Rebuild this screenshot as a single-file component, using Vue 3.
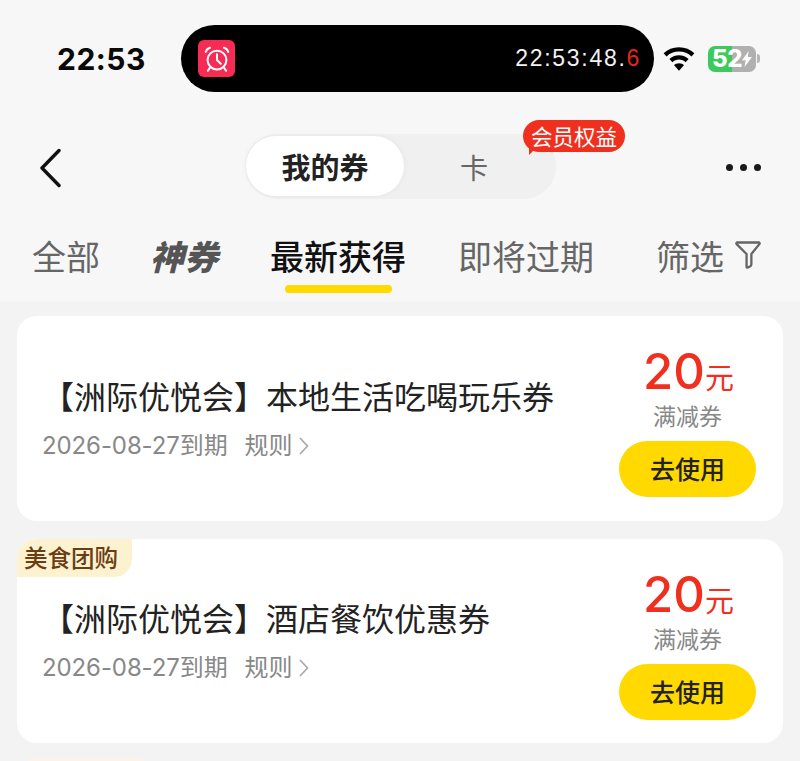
<script setup>
const tabs = [
  { label: '全部', cls: 'all' },
  { label: '神券', cls: 'god' },
  { label: '最新获得', cls: 'latest' },
  { label: '即将过期', cls: 'soon' },
]

const coupons = [
  { title: '【洲际优悦会】本地生活吃喝玩乐券', date: '2026-08-27到期', amount: 20, tag: '' },
  { title: '【洲际优悦会】酒店餐饮优惠券', date: '2026-08-27到期', amount: 20, tag: '美食团购' },
]
</script>

<template>
  <div class="page">
    <div class="status">
      <span class="clock">22:53</span>
      <div class="island">
        <span class="alarm">
          <svg width="30" height="30" viewBox="0 0 28 28" fill="none" stroke="#fff" stroke-width="1.900" stroke-linecap="round" stroke-linejoin="round">
            <circle cx="14" cy="15" r="8.800" />
            <path d="M14 9.500V15l3.500 3.500" />
            <path d="M3.500 7.500c.5-1.900 2-3.500 4-4M24.500 7.500c-.5-1.900-2-3.500-4-4" />
            <path d="M7.500 22 5.500 25M20.500 22l2 3" />
          </svg>
        </span>
        <span class="stamp">22:53:48.<em>6</em></span>
      </div>
      <svg class="wifi" width="32" height="24" viewBox="0 0 30 22">
        <path d="M15 0C9.200 0 4.400 2 .6 5.600l2.700 3C6.400 5.700 10.400 4 15 4s8.600 1.700 11.700 4.600l2.700-3C25.600 2 20.800 0 15 0Z" />
        <path d="M15 7.500c-3.600 0-6.700 1.300-9 3.500l2.800 3c1.600-1.500 3.800-2.500 6.200-2.500s4.600 1 6.200 2.500l2.800-3c-2.300-2.200-5.400-3.500-9-3.500Z" />
        <path d="M15 15c-1.900 0-3.500.7-4.600 1.800L15 22l4.600-5.200C18.500 15.700 16.900 15 15 15Z" />
      </svg>
      <div class="battery">
        <div class="cell">
          <span class="level">52</span>
          <svg class="bolt" width="10" height="18" viewBox="0 0 12 19"><path d="M8 0 0 11h4.500L3 19l9-12H7Z" fill="#fff" /></svg>
        </div>
        <i class="nub"></i>
      </div>
    </div>

    <div class="nav">
      <svg class="back" width="22" height="40" viewBox="0 0 22 40" fill="none" stroke="#111" stroke-width="3.400" stroke-linecap="round" stroke-linejoin="round">
        <path d="M20 2.500 3 20l17 17.500" />
      </svg>
      <div class="segment">
        <span class="seg active">我的券</span>
        <span class="seg">卡</span>
        <span class="badge">会员权益</span>
      </div>
      <div class="more"><i></i><i></i><i></i></div>
    </div>

    <div class="tabs">
      <span v-for="t in tabs" :key="t.cls" class="tab" :class="t.cls">{{ t.label }}</span>
      <span class="tab filter">
        筛选
        <svg width="26" height="28" viewBox="0 0 27 29" fill="none" stroke="#666" stroke-width="2.400" stroke-linejoin="round">
          <path d="M2.500 1.500h22c1 0 1.400 1 .8 1.700l-8.300 10.300v10.500c0 1-.6 1.900-1.500 2.400l-2.500 1.200c-.5.200-1-.2-1-.7V13.500L1.700 3.200c-.6-.7-.2-1.700.8-1.700Z" />
        </svg>
      </span>
    </div>

    <div class="list">
      <div v-for="c in coupons" :key="c.title" class="card">
        <span v-if="c.tag" class="tag">{{ c.tag }}</span>
        <div class="info">
          <div class="title">{{ c.title }}</div>
          <div class="meta">
            <span class="date">{{ c.date }}</span>
            <span class="rule">规则</span>
            <svg width="10" height="18" viewBox="0 0 10 18" fill="none" stroke="#aaa" stroke-width="1.800" stroke-linecap="round" stroke-linejoin="round"><path d="m1.500 1.500 7 7.500-7 7.500" /></svg>
          </div>
        </div>
        <div class="side">
          <div class="price"><b>{{ c.amount }}</b><span>元</span></div>
          <div class="kind">满减券</div>
          <div class="use">去使用</div>
        </div>
      </div>
      <div class="peek"></div>
    </div>
  </div>
</template>

<style scoped>
.page {
  width: 800px;
  height: 761px;
  overflow: hidden;
  background: #f7f7f7;
  font-family: "Noto Sans CJK SC", "Noto Sans", sans-serif;
  color: #111;
}
.status {
  display: flex;
  align-items: center;
  height: 67px;
  padding: 25px 0 0 57px;
}
.clock {
  width: 124px;
  padding-top: 1px;
  font-family: Inter, sans-serif;
  font-size: 30px;
  font-weight: 700;
  letter-spacing: 0.5px;
  color: #0a0a0a;
}
.island {
  display: flex;
  align-items: center;
  justify-content: space-between;
  width: 473px;
  height: 67px;
  padding: 0 13px 0 17px;
  box-sizing: border-box;
  background: #000;
  border-radius: 34px;
}
.alarm {
  display: flex;
  align-items: center;
  justify-content: center;
  width: 37px;
  height: 37px;
  background: #f62c55;
  border-radius: 6px;
}
.stamp {
  font-family: "Liberation Sans", sans-serif;
  font-size: 23px;
  letter-spacing: 1.700px;
  color: #f2f2f2;
}
.stamp em {
  font-style: normal;
  color: #e8231c;
}
.wifi {
  margin-left: 9px;
  fill: #000;
}
.battery {
  display: flex;
  align-items: center;
  margin-left: 13px;
}
.cell {
  display: flex;
  align-items: center;
  width: 48px;
  height: 26px;
  padding-left: 4px;
  box-sizing: border-box;
  border-radius: 7px;
  background: linear-gradient(90deg, #3dc95c 51%, #b0b0b0 51%);
}
.level {
  font-family: Inter, sans-serif;
  font-size: 24px;
  font-weight: 800;
  line-height: 26px;
  letter-spacing: -0.5px;
  color: #fff;
}
.bolt {
  flex: none;
  margin-left: 0;
}
.nub {
  width: 3px;
  height: 9px;
  margin-left: 1px;
  background: #b5b5b5;
  border-radius: 0 3px 3px 0;
}
.nav {
  display: flex;
  align-items: center;
  height: 66px;
  margin-top: 41px;
  padding: 0 39px;
}
.back {
  margin-top: 3px;
}
.segment {
  position: relative;
  display: flex;
  align-items: center;
  width: 311px;
  height: 65px;
  margin-left: 184px;
  padding-left: 1px;
  box-sizing: border-box;
  background: #f0f0f0;
  border-radius: 33px;
}
.seg {
  width: 140px;
  height: 60px;
  line-height: 62px;
  text-align: center;
  font-size: 28px;
  color: #666;
}
.seg.active {
  width: 158px;
  line-height: 60px;
  background: #fff;
  border-radius: 30px;
  box-shadow: 0 0 6px rgba(0, 0, 0, 0.05);
  font-size: 29px;
  font-weight: 700;
  color: #222;
}
.badge {
  position: absolute;
  left: 278px;
  top: -14px;
  width: 102px;
  height: 32px;
  line-height: 31px;
  text-align: center;
  font-size: 21.500px;
  color: #fff;
  background: #f0301f;
  border-radius: 16px;
}
.badge::after {
  content: "";
  position: absolute;
  left: 6px;
  bottom: -3px;
  border-top: 7px solid #f0301f;
  border-right: 7px solid transparent;
}
.more {
  display: flex;
  gap: 6.500px;
  margin-left: auto;
  margin-top: 3px;
}
.more i {
  width: 7.500px;
  height: 7.500px;
  background: #1a1a1a;
  border-radius: 50%;
}
.tabs {
  display: flex;
  align-items: center;
  height: 56px;
  margin-top: 28px;
  padding-left: 32px;
  font-size: 34px;
  color: #666;
}
.tab {
  position: relative;
  white-space: nowrap;
}
.god {
  margin-left: 50px;
  font-weight: 900;
  font-style: italic;
  color: #555;
}
.latest {
  margin-left: 52px;
  font-weight: 500;
  color: #111;
}
.latest::after {
  content: "";
  position: absolute;
  left: 15px;
  right: 14px;
  bottom: -13px;
  height: 8px;
  background: #ffd900;
  border-radius: 4px;
}
.soon {
  margin-left: 52px;
}
.filter {
  display: flex;
  align-items: center;
  gap: 11px;
  margin-left: 62px;
}
.list {
  display: flex;
  flex-direction: column;
  gap: 18px;
  height: 459px;
  margin-top: 19px;
  padding: 14px 17px 0;
  box-sizing: border-box;
  background: #f3f3f3;
}
.card {
  position: relative;
  display: flex;
  align-items: center;
  justify-content: space-between;
  flex: none;
  height: 204.500px;
  padding: 0 27px 0 25px;
  box-sizing: border-box;
  background: #fff;
  border-radius: 20px;
}
.tag {
  position: absolute;
  left: 0;
  top: 0;
  width: 115px;
  height: 38px;
  padding-left: 7px;
  box-sizing: border-box;
  line-height: 37px;
  font-size: 23.500px;
  font-weight: 500;
  color: #6b3d14;
  background: #fdf2cf;
  border-radius: 20px 0 18px 0;
}
.info {
  min-width: 0;
  margin-top: -2px;
}
.title {
  font-size: 32px;
  line-height: 44px;
  color: #222;
  white-space: nowrap;
}
.meta {
  display: flex;
  align-items: center;
  margin-top: 13px;
  font-family: Inter, "Noto Sans CJK SC", sans-serif;
  font-size: 24px;
  line-height: 32px;
  color: #888;
}
.date {
  letter-spacing: -0.1px;
}
.rule {
  margin: 0 6px 0 17px;
}
.side {
  display: flex;
  flex-direction: column;
  align-items: center;
  width: 137px;
  margin-top: 3px;
}
.price {
  display: flex;
  align-items: baseline;
  height: 60px;
  margin-left: 2px;
  line-height: 60px;
  color: #f0301f;
}
.price b {
  font-family: Inter, sans-serif;
  font-size: 49px;
  font-weight: 500;
}
.price span {
  font-size: 29px;
}
.kind {
  margin-top: -3px;
  font-size: 23px;
  line-height: 32px;
  color: #888;
}
.use {
  width: 137px;
  height: 56px;
  margin-top: 10px;
  line-height: 55px;
  text-align: center;
  font-size: 25px;
  font-weight: 500;
  color: #222;
  background: #ffd900;
  border-radius: 28px;
}
.peek {
  flex: none;
  width: 115px;
  height: 3px;
  margin: -3px 0 0 11px;
  background: #fbf3e6;
}
</style>

<style>
html, body {
  margin: 0;
  overflow: hidden;
}
</style>
